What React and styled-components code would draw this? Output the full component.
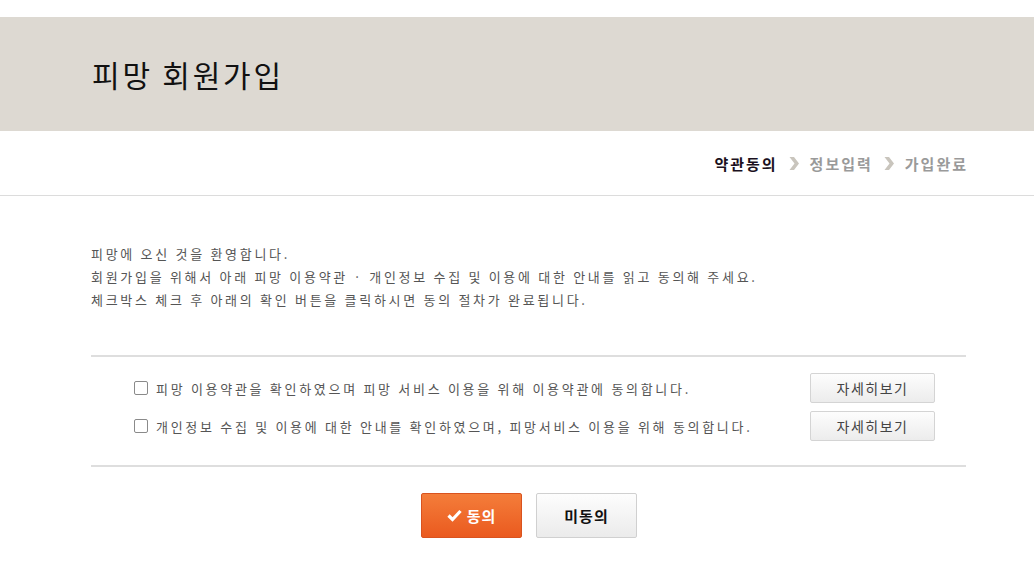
import React from 'react';
import styled, { createGlobalStyle } from 'styled-components';

const GlobalStyle = createGlobalStyle`
  html, body {
    margin: 0;
    padding: 0;
    background: #fff;
    font-family: "Noto Sans CJK KR", "Noto Sans", sans-serif;
  }
`;

const Page = styled.div`
  width: 1034px;
  padding-top: 17px;
`;

const Header = styled.header`
  height: 114px;
  background: #ddd9d2;
  display: flex;
  align-items: center;
  padding-left: 92px;

  h1 {
    margin: 0;
    font-size: 30px;
    font-weight: 400;
    color: #111;
    letter-spacing: 2.8px;
  }
`;

const StepBar = styled.nav`
  height: 64px;
  border-bottom: 1px solid #dcdcdc;
  display: flex;
  align-items: center;
  justify-content: flex-end;
  padding-right: 66px;
  gap: 10px;
`;

const Step = styled.span`
  font-size: 15px;
  font-weight: 700;
  letter-spacing: 2px;
  color: ${(p) => (p.$active ? '#1a1020' : '#9a9a9a')};
`;

const Chevron = () => (
  <svg width="12" height="15" viewBox="0 0 12 15">
    <path d="M1.5 1 L6 1 L11 7.5 L6 14 L1.5 14 L6.5 7.5 Z" fill="#c9c5bd" />
  </svg>
);

const Content = styled.main`
  padding: 46px 68px 0 91px;
`;

const Intro = styled.div`
  font-size: 13px;
  line-height: 23px;
  color: #555;
  letter-spacing: 2.7px;
  margin-bottom: 44px;

  p {
    margin: 0;
  }
`;

const AgreeBox = styled.section`
  border-top: 2px solid #dedede;
  border-bottom: 2px solid #dedede;
  padding: 16px 31px 24px 43px;
  display: flex;
  flex-direction: column;
  gap: 8px;
`;

const Row = styled.div`
  display: flex;
  align-items: center;
  justify-content: space-between;
`;

const Label = styled.label`
  display: flex;
  align-items: center;
  gap: 8px;
  font-size: 13px;
  color: #555;
  letter-spacing: 2.7px;
`;

const Check = styled.span`
  width: 12px;
  height: 12px;
  border: 1px solid #8a8a8a;
  border-radius: 2px;
  background: #fff;
`;

const DetailButton = styled.button`
  width: 125px;
  height: 30px;
  border: 1px solid #d4d4d4;
  border-radius: 2px;
  background: linear-gradient(#fdfdfd, #ececec);
  font-family: inherit;
  font-size: 14px;
  color: #444;
  letter-spacing: 1.5px;
`;

const Actions = styled.div`
  display: flex;
  justify-content: center;
  gap: 14px;
  padding-top: 26px;
  padding-left: 1px;
`;

const ActionButton = styled.button`
  width: 101px;
  height: 45px;
  border-radius: 2px;
  font-family: inherit;
  font-size: 15px;
  font-weight: 700;
  letter-spacing: 1px;
  display: flex;
  align-items: center;
  justify-content: center;
  gap: 5px;
  border: 1px solid ${(p) => (p.$primary ? '#d9531f' : '#d0d0d0')};
  background: ${(p) =>
    p.$primary
      ? 'linear-gradient(#f47d3a, #ea5a1f)'
      : 'linear-gradient(#fdfdfd, #ebebeb)'};
  color: ${(p) => (p.$primary ? '#fff' : '#111')};
`;

const CheckMark = () => (
  <svg width="15" height="13" viewBox="0 0 15 13">
    <path d="M1.5 6.5 L5.5 10.5 L13.5 2" stroke="#fff" strokeWidth="3.2" fill="none" />
  </svg>
);

const agreements = [
  '피망 이용약관을 확인하였으며 피망 서비스 이용을 위해 이용약관에 동의합니다.',
  '개인정보 수집 및 이용에 대한 안내를 확인하였으며, 피망서비스 이용을 위해 동의합니다.',
];

export default function App() {
  return (
    <Page>
      <GlobalStyle />
      <Header>
        <h1>피망 회원가입</h1>
      </Header>
      <StepBar>
        <Step $active>약관동의</Step>
        <Chevron />
        <Step>정보입력</Step>
        <Chevron />
        <Step>가입완료</Step>
      </StepBar>
      <Content>
        <Intro>
          <p>피망에 오신 것을 환영합니다.</p>
          <p>회원가입을 위해서 아래 피망 이용약관 · 개인정보 수집 및 이용에 대한 안내를 읽고 동의해 주세요.</p>
          <p>체크박스 체크 후 아래의 확인 버튼을 클릭하시면 동의 절차가 완료됩니다.</p>
        </Intro>
        <AgreeBox>
          {agreements.map((text) => (
            <Row key={text}>
              <Label>
                <Check />
                {text}
              </Label>
              <DetailButton>자세히보기</DetailButton>
            </Row>
          ))}
        </AgreeBox>
        <Actions>
          <ActionButton $primary>
            <CheckMark />
            동의
          </ActionButton>
          <ActionButton>미동의</ActionButton>
        </Actions>
      </Content>
    </Page>
  );
}
